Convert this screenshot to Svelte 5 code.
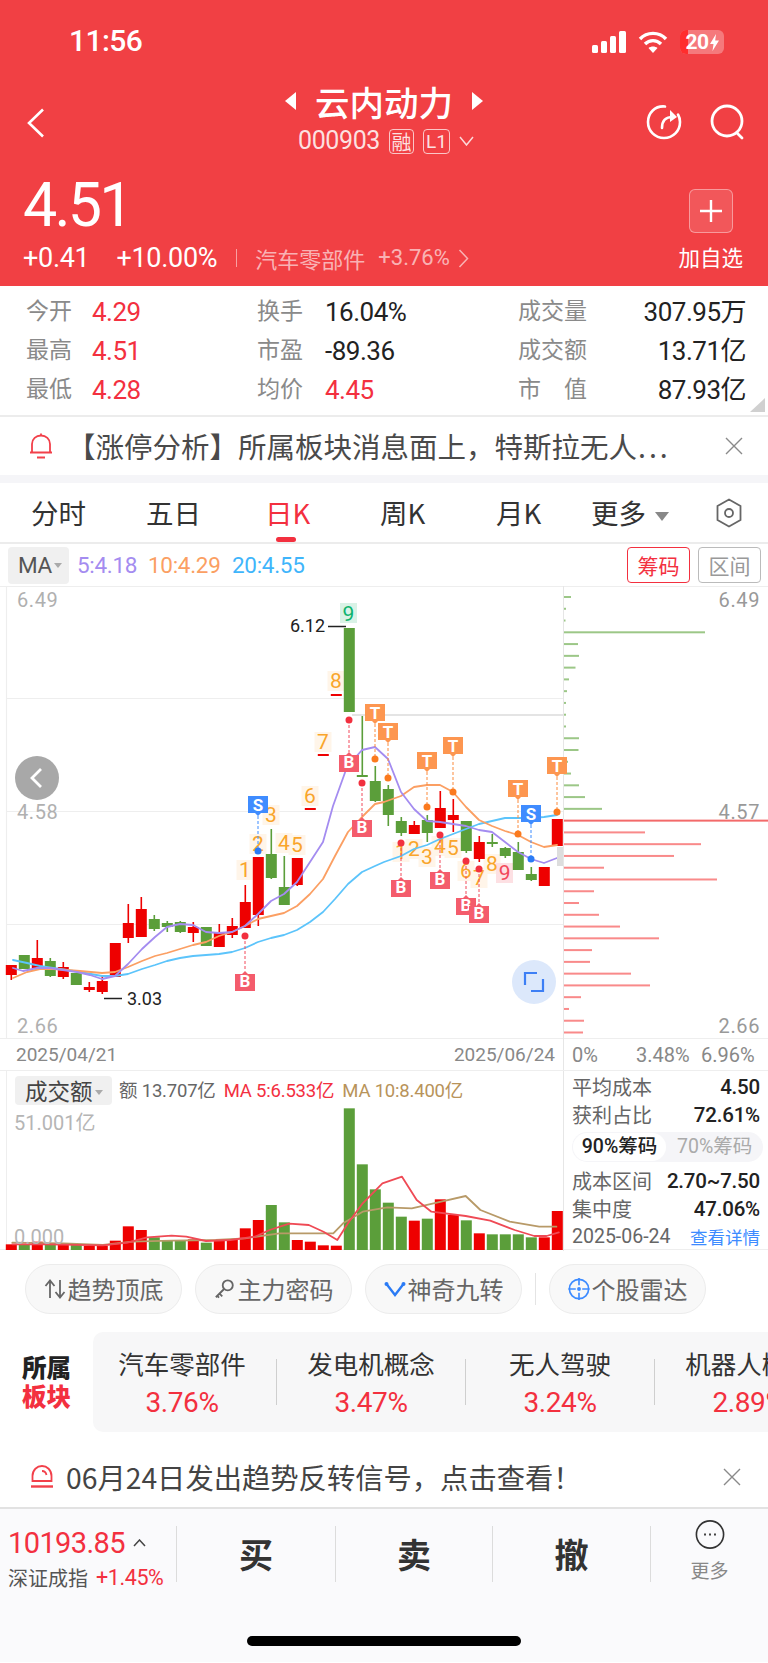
<script>
	const RED = '#ee0000';
	const GREEN = '#5b9e3a';

	const x0 = 11.3;
	const step = 13;
	const xAt = (i) => x0 + i * step;

	// [up, bodyTop, bodyBottom, wickTop, wickBottom]
	const candles = [
		[1, 966, 976, 966, 981], [0, 956, 970, 956, 970], [1, 959, 969, 941, 969], [0, 962, 977, 959, 978],
		[1, 968, 978, 963, 980], [0, 974, 986, 974, 986], [1, 988, 991, 983, 993], [1, 982, 993, 977, 995],
		[1, 944, 978, 944, 978], [1, 924, 939, 905, 944], [1, 910, 938, 898, 938], [0, 920, 930, 916, 932],
		[0, 924, 928, 922, 933], [0, 923, 933, 922, 934], [1, 928, 934, 923, 943], [0, 928, 947, 928, 947],
		[1, 934, 948, 925, 948], [1, 927, 936, 919, 939], [1, 903, 929, 886, 929], [1, 858, 916, 858, 927],
		[0, 855, 879, 830, 880], [0, 888, 906, 857, 906], [1, 859, 886, 859, 887], [1, 809, 811, 809, 811],
		[1, 755, 757, 755, 757], [1, 695, 697, 695, 697], [0, 629, 713, 629, 713], [0, 776, 778, 717, 778],
		[0, 782, 802, 767, 803], [0, 790, 816, 786, 827], [0, 822, 834, 818, 837], [1, 826, 835, 822, 835],
		[0, 821, 834, 816, 843], [1, 809, 829, 792, 829], [1, 816, 821, 800, 833], [0, 822, 852, 822, 854],
		[1, 843, 860, 837, 863], [0, 843, 845, 835, 848], [0, 849, 857, 848, 859], [0, 853, 871, 843, 871],
		[0, 875, 881, 868, 882], [1, 868, 887, 868, 887], [1, 820, 847, 820, 847]
	];

	const ma5 = [[13,969],[23,972],[37,969],[50,969],[63,971],[77,973],[90,976],[102,980],[115,977],[128,965],[142,950],[155,938],[167,928],[180,925],[193,926],[206,933],[219,934],[232,933],[245,927],[258,915],[271,902],[284,895],[297,883],[310,863],[323,843],[333,807],[347,768],[362,751],[375,748],[388,760],[401,793],[414,810],[427,822],[440,823],[453,825],[466,827],[479,831],[492,833],[505,843],[518,853],[531,860],[544,864],[557,859]];
	const ma10 = [[13,979],[27,973],[40,970],[53,970],[67,971],[80,972],[102,974],[115,973],[128,968],[142,962],[155,957],[167,954],[180,950],[193,946],[206,943],[219,937],[232,933],[245,927],[258,920],[271,917],[284,914],[297,907],[310,895],[323,880],[335,857],[348,833],[362,818],[375,805],[384,803],[401,797],[414,788],[427,786],[440,786],[453,793],[466,808],[479,821],[492,827],[505,832],[518,836],[531,843],[544,848],[557,846]];
	const ma20 = [[13,961],[27,964],[40,967],[53,969],[67,971],[80,973],[102,977],[115,977],[128,975],[142,970],[155,966],[167,962],[180,959],[193,957],[206,956],[219,955],[232,953],[245,949],[258,943],[271,939],[284,936],[297,931],[310,923],[323,913],[335,900],[348,885],[362,873],[375,867],[384,863],[401,857],[414,850],[427,846],[440,840],[453,835],[466,830],[479,825],[492,822],[505,819],[518,819],[531,819],[544,818],[557,816]];

	const toPoints = (pts) => pts.map((p) => p.join(',')).join(' ');

	const seq = [
		['1', 245, 871], ['2', 258, 845], ['3', 271, 816], ['4', 284, 844], ['5', 297, 846], ['6', 310, 797],
		['7', 323, 743], ['8', 336, 682], ['1', 401, 853], ['2', 414, 850], ['3', 427, 858], ['4', 440, 847],
		['5', 453, 849], ['6', 466, 872], ['7', 479, 879], ['8', 492, 865]
	];

	// [x, flagTop, dotY]
	const buys = [[245, 972, 937], [349, 753, 721], [362, 818, 784], [401, 878, 844], [440, 870, 836], [466, 896, 862], [479, 904, 870]];
	const tops = [[375, 705, 760], [388, 724, 779], [427, 753, 808], [453, 738, 793], [518, 781, 835], [557, 758, 813]];
	const sells = [[258, 797, 852], [531, 806, 860]];

	function flagDown(x, y) {
		return `M${x - 10} ${y}h20v17h-7l-3 3l-3 -3h-7z`;
	}
	function flagUp(x, y) {
		return `M${x - 10} ${y + 3}h7l3 -3l3 3h7v17h-20z`;
	}

	const chipGreen = [7, 2, 1.5, 141, 14, 15, 11.5, 5, 3, 2, 2, 2, 15, 14.5, 4, 7, 15, 21, 38];
	const chipRed = [205, 81, 137, 110, 40, 153, 30, 15, 35, 56, 95, 28, 26, 67, 86, 17, 5, 20, 19];
	const chips = [
		...chipGreen.map((w) => [w, '#9cc787']),
		...chipRed.map((w, i) => [w, i === 0 ? '#f36a6a' : '#f98a8a'])
	];

	const volTops = [553, 553, 545, 550, 552, 552, 558, 557, 542, 499, 510, 532, 540, 540, 538, 548, 540, 540, 505, 480, 435, 487, 540, 545, 556, 557, 145, 313, 388, 428, 470, 482, 476, 418, 465, 481, 520, 523, 523, 523, 532, 532, 453];
	const volLine5 = [[25,553],[100,553],[210,556],[260,548],[300,532],[350,527],[380,530],[420,543],[470,540],[520,530],[550,510],[590,491],[630,495],[660,515],[688,540],[710,490],[740,430],[780,370],[820,350],[850,420],[880,455],[950,468],[1000,482],[1050,510],[1090,528],[1115,528],[1140,517]];
	const volLine10 = [[25,548],[130,550],[210,555],[270,545],[350,542],[440,540],[500,535],[570,520],[680,520],[700,490],[740,455],[790,442],[840,445],[900,425],[950,408],[980,450],[1040,485],[1100,500],[1135,500]];
	const volPoints = (pts) => pts.map(([x, y]) => `${(x / 2.04).toFixed(1)},${(y / 3).toFixed(1)}`).join(' ');

	const tabs = ['分时', '五日', '日K', '周K', '月K'];
	const sectors = [['汽车零部件', '3.76%'], ['发电机概念', '3.47%'], ['无人驾驶', '3.24%'], ['机器人概念', '2.89%']];
</script>

<div class="page">
	<header class="head">
		<div class="status">
			<span class="time">11:56</span>
			<div class="status-icons">
				<svg width="34" height="22" viewBox="0 0 34 22" fill="#fff">
					<rect x="0" y="14" width="6" height="8" rx="1.5" />
					<rect x="9" y="10" width="6" height="12" rx="1.5" />
					<rect x="18" y="5" width="6" height="17" rx="1.5" />
					<rect x="27" y="0" width="7" height="22" rx="1.5" />
				</svg>
				<svg width="30" height="22" viewBox="0 0 30 22" fill="none" stroke="#fff" stroke-width="3.4">
					<path d="M2 8c7-7.5 19-7.5 26 0" />
					<path d="M7 13c4.500-4.500 11.500-4.500 16 0" />
					<path d="M15 22l-4.500-5c2.500-2 6.500-2 9 0z" fill="#fff" stroke="none" />
				</svg>
				<div class="battery"><i></i><b>20</b><svg width="9" height="17" viewBox="0 0 9 17" fill="#fff"><path d="M6 0L0 10h3.500L2.500 17L9 6.500H5.200z" /></svg></div>
			</div>
		</div>

		<div class="nav">
			<svg class="back" width="18" height="30" viewBox="0 0 18 30" fill="none" stroke="#fff" stroke-width="2.6"><path d="M16 1.500L2 15l14 13.500" /></svg>
			<div class="nav-mid">
				<div class="title-row">
					<span class="tri-l"></span>
					<span class="title">云内动力</span>
					<span class="tri-r"></span>
				</div>
				<div class="code-row">
					<span class="code">000903</span>
					<span class="tag">融</span>
					<span class="tag tag-l">L1</span>
					<svg width="15" height="10" viewBox="0 0 15 10" fill="none" stroke="rgba(255,255,255,.8)" stroke-width="1.500"><path d="M1 1l6.500 8L14 1" /></svg>
				</div>
			</div>
			<div class="nav-icons">
				<svg width="36" height="36" viewBox="0 0 36 36" fill="none" stroke="#fff" stroke-width="2.600" stroke-linecap="round">
					<path d="M19 2.500C9 1.500 2 9 2 18c0 9 7 16 16 16s16-7 16-16c0-3-.8-5.500-2-7.500" />
					<path d="M16 24c0-7 3-11 11-11" />
					<path d="M24 6l7 7l-7 5" fill="#fff" stroke="none" />
				</svg>
				<svg width="36" height="36" viewBox="0 0 36 36" fill="none" stroke="#fff" stroke-width="2.800" stroke-linecap="round">
					<circle cx="17" cy="17" r="15" />
					<path d="M27 29l5 5" />
				</svg>
			</div>
		</div>

		<div class="quote">
			<div class="quote-left">
				<div class="price">4.51</div>
				<div class="change">
					<span class="chg">+0.41</span>
					<span class="chg pct">+10.00%</span>
					<span class="vbar"></span>
					<span class="sector-name">汽车零部件</span>
					<span class="sector-pct">+3.76%</span>
					<svg width="11" height="19" viewBox="0 0 11 19" fill="none" stroke="rgba(255,255,255,.6)" stroke-width="1.500"><path d="M1.500 1L9.500 9.500L1.500 18" /></svg>
				</div>
			</div>
			<div class="add">
				<div class="add-btn">
					<svg width="22" height="22" viewBox="0 0 22 22" stroke="#fff" stroke-width="2.400"><path d="M11 0v22M0 11h22" /></svg>
				</div>
				<span>加自选</span>
			</div>
		</div>
	</header>

	<section class="stats">
		<div class="stat-col col-a">
			<div class="stat"><span class="k">今开</span><span class="v up">4.29</span></div>
			<div class="stat"><span class="k">最高</span><span class="v up">4.51</span></div>
			<div class="stat"><span class="k">最低</span><span class="v up">4.28</span></div>
		</div>
		<div class="stat-col col-b">
			<div class="stat"><span class="k">换手</span><span class="v">16.04%</span></div>
			<div class="stat"><span class="k">市盈</span><span class="v">-89.36</span></div>
			<div class="stat"><span class="k">均价</span><span class="v up">4.45</span></div>
		</div>
		<div class="stat-col col-c">
			<div class="stat"><span class="k wide">成交量</span><span class="v">307.95万</span></div>
			<div class="stat"><span class="k wide">成交额</span><span class="v">13.71亿</span></div>
			<div class="stat"><span class="k wide">市　值</span><span class="v">87.93亿</span></div>
		</div>
		<span class="corner"></span>
	</section>

	<div class="notice">
		<svg width="24" height="26" viewBox="0 0 24 26" fill="none" stroke="#f2404a" stroke-width="1.800">
			<path d="M3 19V11c0-5 4-8.500 9-8.500S21 6 21 11v8M1 19.500h22M8 24.500h8M12 0.500v2" />
		</svg>
		<span class="notice-text">【涨停分析】所属板块消息面上，特斯拉无人<span class="dots">...</span></span>
		<svg class="close" width="18" height="18" viewBox="0 0 18 18" stroke="#8a8a8a" stroke-width="1.400"><path d="M1 1l16 16M17 1L1 17" /></svg>
	</div>
	<div class="band"></div>

	<nav class="tabs">
		{#each tabs as t, i}
			<span class="tab" class:on={i === 2}>{t}</span>
		{/each}
		<span class="tab more">更多<i></i></span>
		<svg class="hex" width="26" height="30" viewBox="0 0 26 30" fill="none" stroke="#666" stroke-width="1.800">
			<path d="M13 1.500L24.500 8v14L13 28.500L1.500 22V8z" />
			<circle cx="13" cy="15" r="4" />
		</svg>
	</nav>

	<div class="ma-row">
		<span class="ma-btn">MA<i></i></span>
		<span class="m5">5:4.18</span>
		<span class="m10">10:4.29</span>
		<span class="m20">20:4.55</span>
		<span class="side-btn active">筹码</span>
		<span class="side-btn">区间</span>
	</div>

	<div class="chart">
		<svg class="plot" width="768" height="453" viewBox="0 587 768 453">
			<g stroke="#eeeeee" stroke-width="1.200">
				<path d="M0 587.500H768M6.500 587V1040M6 699.500H563M6 812.500H563M6 925.500H563M0 1039.500H768" />
			</g>
			<path d="M352 716H563" stroke="#e4e4e4" stroke-width="1.800" />
			<path d="M563.500 587V1040" stroke="#e6e6e6" />

			{#each chips as [w, c], i}
				<rect x="564" y={597 + i * 11.77} width={w} height="2" fill={c} />
			{/each}

			{#each seq as [n, x, y]}
				<rect x={x - 8.500} y={y - 10} width="17" height="20" fill="#fff5e9" />
			{/each}
			<rect x="340" y="604" width="17" height="20" fill="#d9f2e6" />
			<rect x="496" y="864" width="17" height="20" fill="#fde0e3" />

			{#each candles as [up, top, bottom, wt, wb], i}
				<rect x={xAt(i) - 0.800} y={wt} width="1.600" height={wb - wt} fill={up ? RED : GREEN} />
				<rect x={xAt(i) - 5.500} y={top} width="11" height={bottom - top} fill={up ? RED : GREEN} />
			{/each}

			{#each seq as [n, x, y]}
				<text class="seq" x={x} y={y + 7} fill="#f9a52b">{n}</text>
			{/each}
			<text class="seq" x="348.500" y="622" fill="#0db36e">9</text>
			<text class="seq" x="504.700" y="881" fill="#f2485a">9</text>

			<polyline points={toPoints(ma20)} class="ma" stroke="#5cc4fb" />
			<polyline points={toPoints(ma10)} class="ma" stroke="#fb9f63" />
			<polyline points={toPoints(ma5)} class="ma" stroke="#a48cf0" />

			{#each buys as [x, y, d]}
				<path d="M{x} {d}V{y}" stroke="#f2485a" stroke-dasharray="3 2" />
				<circle cx={x} cy={d} r="3.500" fill="#f2303f" />
				<path d={flagUp(x, y)} fill="#f45c6c" />
				<text class="flag" x={x} y={y + 16}>B</text>
			{/each}
			{#each tops as [x, y, d]}
				<path d="M{x} {y + 20}V{d}" stroke="#fb8a3c" stroke-dasharray="3 2" />
				<circle cx={x} cy={d} r="3.500" fill="#fb7a1e" />
				<path d={flagDown(x, y)} fill="#fd9650" />
				<text class="flag" x={x} y={y + 15}>T</text>
			{/each}
			{#each sells as [x, y, d]}
				<path d="M{x} {y + 20}V{d}" stroke="#3d8bff" stroke-dasharray="3 2" />
				<circle cx={x} cy={d} r="3.500" fill="#2b7bf5" />
				<path d={flagDown(x, y)} fill="#3f8cff" />
				<text class="flag" x={x} y={y + 15}>S</text>
			{/each}

			<rect x="557" y="848" width="6" height="19" fill="#dddddd" />

			<path d="M328 627.500H346" stroke="#222" stroke-width="1.500" />
			<text class="mark" x="290" y="633">6.12</text>
			<path d="M104 999.500H122" stroke="#222" stroke-width="1.500" />
			<text class="mark" x="127" y="1006">3.03</text>

			<text class="axis" x="17" y="608">6.49</text>
			<text class="axis" x="17" y="820">4.58</text>
			<text class="axis" x="17" y="1034">2.66</text>
			<text class="axis dark end" x="760" y="608">6.49</text>
			<text class="axis dark end" x="760" y="820">4.57</text>
			<text class="axis dark end" x="760" y="1034">2.66</text>

			<circle cx="37" cy="779" r="22" fill="#a8a8a8" />
			<path d="M41 770l-9 9l9 9" fill="none" stroke="#fff" stroke-width="2.800" />

			<circle cx="534" cy="983" r="22" fill="#dce8fb" />
			<path d="M525 986v-12h12M543 980v12h-12" fill="none" stroke="#3d7ff5" stroke-width="2.200" />
		</svg>
	</div>

	<div class="dates">
		<span class="date-l">2025/04/21</span>
		<span class="date-r">2025/06/24</span>
		<span class="pc p0">0%</span>
		<span class="pc p1">3.48%</span>
		<span class="pc p2">6.96%</span>
	</div>

	<div class="lower">
		<div class="vol">
			<div class="vol-head">
				<span class="vol-btn">成交额<i></i></span>
				<span class="vol-a">额 13.707亿</span>
				<span class="vol-b">MA 5:6.533亿</span>
				<span class="vol-c">MA 10:8.400亿</span>
			</div>
			<div class="vol-chart">
				<svg class="vol-svg" width="563" height="199" viewBox="0 -9 563 199">
					{#each volTops as top, i}
						<rect x={xAt(i) - 5.500} y={top / 3} width="11" height={190 - top / 3} fill={candles[i][0] ? RED : GREEN} />
					{/each}
					<polyline points={volPoints(volLine10)} class="ma" stroke="#b89a68" />
					<polyline points={volPoints(volLine5)} class="ma" stroke="#ef4a55" />
				</svg>
				<span class="vol-max">51.001亿</span>
				<span class="vol-min">0.000</span>
			</div>
		</div>
		<aside class="cost">
			<div class="cost-row"><span>平均成本</span><b>4.50</b></div>
			<div class="cost-row"><span>获利占比</span><b>72.61%</b></div>
			<div class="toggle"><span class="toggle-on">90%筹码</span><span class="toggle-off">70%筹码</span></div>
			<div class="cost-row"><span>成本区间</span><b>2.70~7.50</b></div>
			<div class="cost-row"><span>集中度</span><b>47.06%</b></div>
			<div class="cost-row foot"><span>2025-06-24</span><em>查看详情</em></div>
		</aside>
	</div>

	<div class="pills">
		<span class="pill">
			<svg width="22" height="20" viewBox="0 0 22 20" fill="none" stroke="#666" stroke-width="1.800"><path d="M6 19V2M1.500 7L6 1.500L10.500 7M16 1v17M11.500 13l4.500 5.500l4.500-5.500" /></svg>
			趋势顶底
		</span>
		<span class="pill">
			<svg width="22" height="22" viewBox="0 0 24 24" fill="none" stroke="#666" stroke-width="2"><circle cx="15" cy="8" r="5.500" /><path d="M11 12L2 21M6 17l3 3M3.500 19.500l2 2" /></svg>
			主力密码
		</span>
		<span class="pill">
			<svg width="22" height="16" viewBox="0 0 22 16" fill="none" stroke="#2b7bf5" stroke-width="2.400"><path d="M2.500 3L11 14L19.500 3" /><circle cx="2.500" cy="3" r="2" fill="#2b7bf5" stroke="none" /><circle cx="19.500" cy="3" r="2" fill="#2b7bf5" stroke="none" /></svg>
			神奇九转
		</span>
		<span class="pill-sep"></span>
		<span class="pill">
			<svg width="22" height="24" viewBox="0 0 24 26" fill="none" stroke="#3d8bff" stroke-width="1.800"><circle cx="12" cy="13" r="10.500" /><path d="M12 1v8M12 17v8M0.500 13h8M15.500 13h8" /><circle cx="12" cy="13" r="1.200" fill="#3d8bff" /></svg>
			个股雷达
		</span>
	</div>

	<section class="sectors">
		<div class="sec-label"><b>所属</b><b class="up">板块</b></div>
		<div class="sec-card">
			<div class="sec-track">
				{#each sectors as [name, pct]}
					<div class="sec-item">
						<span class="sec-name">{name}</span>
						<span class="sec-pct">{pct}</span>
					</div>
				{/each}
			</div>
		</div>
	</section>

	<div class="signal">
		<svg width="24" height="24" viewBox="0 0 24 24" fill="none" stroke="#f2404a" stroke-width="1.800">
			<path d="M2.500 16V11C2.500 5 7 1 12 1s9.500 4 9.500 10v5z" />
			<path d="M12 6c2.500 0 4 1.500 4.500 4" />
			<path d="M1 21.500h22" stroke-width="2.400" />
		</svg>
		<span class="signal-text">06月24日发出趋势反转信号，点击查看！</span>
		<svg class="close" width="18" height="18" viewBox="0 0 18 18" stroke="#8a8a8a" stroke-width="1.400"><path d="M1 1l16 16M17 1L1 17" /></svg>
	</div>

	<footer class="bar">
		<div class="bar-row">
			<div class="index">
				<div class="idx-top">
					<span class="idx-val">10193.85</span>
					<svg width="13" height="8" viewBox="0 0 13 8" fill="none" stroke="#444" stroke-width="1.500"><path d="M1 7l5.500-6L12 7" /></svg>
				</div>
				<div class="idx-sub"><span>深证成指</span><em>+1.45%</em></div>
			</div>
			<span class="act buy">买</span>
			<span class="act">卖</span>
			<span class="act">撤</span>
			<div class="act-more">
				<svg width="32" height="32" viewBox="0 0 32 32" fill="none" stroke="#333" stroke-width="1.800">
					<circle cx="16" cy="16" r="15" />
					<path d="M9.500 16h2M15 16h2M20.500 16h2" stroke-width="2" />
				</svg>
				<span>更多</span>
			</div>
		</div>
		<div class="home"></div>
	</footer>
</div>

<style>
	:global(body) {
		margin: 0;
		background: #fff;
	}
	.page {
		--num: Roboto, "Noto Sans CJK SC", sans-serif;
		--cjk: "Noto Sans CJK SC", sans-serif;
		--up: #f3303f;
		width: 768px;
		height: 1663px;
		overflow: hidden;
		font-family: var(--cjk);
		position: relative;
	}
	.up {
		color: var(--up);
	}

	.head {
		height: 286px;
		background: #f14044;
		color: #fff;
		box-sizing: border-box;
	}
	.status {
		height: 76px;
		padding: 22px 44px 0 69px;
		box-sizing: border-box;
		display: flex;
		justify-content: space-between;
		align-items: flex-start;
	}
	.time {
		font: 500 30px/38px var(--num);
		letter-spacing: -0.6px;
	}
	.status-icons {
		display: flex;
		align-items: center;
		gap: 12px;
		margin-top: 8px;
	}
	.battery {
		width: 44px;
		height: 24px;
		border-radius: 6px;
		background: rgba(255, 255, 255, 0.3);
		display: flex;
		align-items: center;
		justify-content: center;
		gap: 1px;
		position: relative;
		overflow: hidden;
	}
	.battery i {
		position: absolute;
		left: 0;
		top: 0;
		bottom: 0;
		width: 8px;
		background: #ff2d2d;
	}
	.battery b {
		font: 700 21px/24px var(--num);
		position: relative;
		letter-spacing: -0.5px;
	}
	.nav {
		height: 84px;
		display: flex;
		position: relative;
		justify-content: center;
	}
	.back {
		position: absolute;
		left: 27px;
		top: 32px;
	}
	.nav-mid {
		display: flex;
		flex-direction: column;
		align-items: center;
	}
	.title-row {
		height: 50px;
		display: flex;
		align-items: center;
		gap: 19px;
	}
	.title {
		font: 500 34.500px/50px var(--cjk);
	}
	.tri-l,
	.tri-r {
		width: 0;
		height: 0;
		border-top: 9px solid transparent;
		border-bottom: 9px solid transparent;
	}
	.tri-l {
		border-right: 11px solid #fff;
	}
	.tri-r {
		border-left: 11px solid #fff;
	}
	.code-row {
		display: flex;
		align-items: center;
		gap: 9px;
		height: 30px;
		margin-left: 4px;
		color: rgba(255, 255, 255, 0.85);
	}
	.code {
		font: 400 25px/30px var(--num);
		letter-spacing: -0.4px;
	}
	.tag {
		width: 25px;
		height: 25px;
		box-sizing: border-box;
		border: 1px solid rgba(255, 255, 255, 0.7);
		border-radius: 4px;
		font: 400 20px/23px var(--cjk);
		text-align: center;
	}
	.tag-l {
		width: 27px;
		font: 400 19px/23px var(--num);
	}
	.nav-icons {
		position: absolute;
		right: 22px;
		top: 28px;
		display: flex;
		gap: 28px;
	}
	.quote {
		height: 126px;
		position: relative;
		padding-left: 23px;
	}
	.price {
		font: 400 61px/66px var(--num);
		letter-spacing: -2.800px;
		height: 75px;
		padding-top: 12px;
		box-sizing: border-box;
	}
	.quote-left {
		display: flex;
		flex-direction: column;
	}
	.change {
		display: flex;
		align-items: center;
		height: 24px;
		margin-top: 11px;
	}
	.chg {
		font: 400 27px/24px var(--num);
		letter-spacing: -0.3px;
	}
	.pct {
		margin-left: 27px;
	}
	.vbar {
		width: 1px;
		height: 18px;
		margin: 0 18px 0 19px;
		background: rgba(255, 255, 255, 0.5);
	}
	.sector-name {
		font: 400 22px/24px var(--cjk);
		color: rgba(255, 255, 255, 0.62);
	}
	.sector-pct {
		font: 400 22px/24px var(--num);
		color: rgba(255, 255, 255, 0.62);
		margin: 0 8px 0 13px;
	}
	.add {
		position: absolute;
		right: 25px;
		top: 29px;
		display: flex;
		flex-direction: column;
		align-items: center;
		gap: 9px;
		font: 400 21.500px/30px var(--cjk);
	}
	.add-btn {
		width: 44px;
		height: 44px;
		box-sizing: border-box;
		border: 1px solid rgba(255, 255, 255, 0.4);
		border-radius: 6px;
		background: rgba(255, 255, 255, 0.12);
		display: flex;
		align-items: center;
		justify-content: center;
	}

	.stats {
		height: 131px;
		box-sizing: border-box;
		padding-top: 5px;
		border-bottom: 2px solid #ececec;
		position: relative;
		display: grid;
		grid-template-columns: 257px 261px 1fr;
	}
	.stat {
		height: 39px;
		display: flex;
		align-items: center;
	}
	.col-a {
		padding-left: 26px;
	}
	.col-c {
		padding-right: 22px;
	}
	.col-c .stat {
		justify-content: space-between;
	}
	.k {
		font: 400 23px/39px var(--cjk);
		color: #8a8a8a;
		width: 66px;
		margin-top: -2px;
	}
	.k.wide {
		width: auto;
	}
	.v {
		font: 400 26px/39px var(--num);
		color: #222;
		letter-spacing: -0.5px;
		margin-top: 4px;
	}
	.v.up {
		color: var(--up);
	}
	.col-b .k {
		width: 68px;
	}
	.corner {
		position: absolute;
		right: 3px;
		bottom: 3px;
		width: 0;
		height: 0;
		border-left: 15px solid transparent;
		border-bottom: 14px solid #d0d0d0;
	}

	.notice {
		height: 58px;
		display: flex;
		align-items: center;
		padding: 0 25px 0 29px;
		color: #444;
	}
	.notice-text {
		font: 400 28.500px/56px var(--cjk);
		margin-left: 14px;
		flex: 1;
		white-space: nowrap;
		color: #4a4a4a;
	}
	.dots {
		letter-spacing: 3px;
		margin-left: 1px;
	}
	.band {
		height: 8px;
		background: #f5f5f8;
	}

	.tabs {
		height: 61px;
		border-bottom: 2px solid #ececec;
		box-sizing: border-box;
		position: relative;
		display: flex;
		align-items: flex-start;
		padding-left: 31px;
	}
	.tab {
		font: 400 27.500px/58px var(--cjk);
		color: #333;
		flex: 0 0 116px;
		white-space: nowrap;
	}
	.tab:nth-child(3) {
		margin-left: 3px;
		flex-basis: 115px;
	}
	.tab:nth-child(2) {
		flex-basis: 116px;
		margin-left: -1px;
	}
	.tab.on {
		color: var(--up);
		position: relative;
	}
	.tab.on::after {
		content: '';
		position: absolute;
		left: 11px;
		top: 54px;
		width: 20px;
		height: 5px;
		border-radius: 3px;
		background: var(--up);
	}
	.tab.more {
		position: absolute;
		left: 591px;
	}
	.tab.more i {
		display: inline-block;
		margin-left: 9px;
		border-left: 7px solid transparent;
		border-right: 7px solid transparent;
		border-top: 9px solid #888;
		vertical-align: 3px;
	}
	.hex {
		position: absolute;
		right: 26px;
		top: 15px;
	}

	.ma-row {
		height: 42px;
		display: flex;
		align-items: center;
		padding: 0 7px 0 8px;
		font: 400 22.500px/40px var(--num);
		letter-spacing: -0.3px;
		position: relative;
	}
	.ma-btn {
		width: 61px;
		height: 37px;
		box-sizing: border-box;
		padding-left: 10px;
		border-radius: 4px;
		background: #f0f0f0;
		color: #555;
		line-height: 37px;
		margin-right: 8px;
	}
	.ma-btn i,
	.vol-btn i {
		display: inline-block;
		margin-left: 2px;
		border-left: 4px solid transparent;
		border-right: 4px solid transparent;
		border-top: 5px solid #aaa;
		vertical-align: 5px;
	}
	.m5 {
		color: #a48cf0;
		width: 71px;
	}
	.m10 {
		color: #fb9f63;
		width: 84px;
	}
	.m20 {
		color: #3fb5fb;
	}
	.side-btn {
		width: 63px;
		height: 36px;
		box-sizing: border-box;
		border: 1px solid #bbb;
		border-radius: 4px;
		color: #999;
		font: 400 21px/34px var(--cjk);
		text-align: center;
		letter-spacing: 0;
		margin-left: 8px;
	}
	.side-btn.active {
		margin-left: auto;
		border-color: var(--up);
		color: var(--up);
	}

	.chart {
		height: 453px;
	}
	.plot {
		display: block;
	}
	.ma {
		fill: none;
		stroke-width: 1.800;
		stroke-linejoin: round;
		stroke-linecap: round;
	}
	.seq {
		font: 400 21px var(--num);
		text-anchor: middle;
	}
	.flag {
		font: 700 17px var(--num);
		fill: #fff;
		text-anchor: middle;
	}
	.mark {
		font: 400 18px var(--num);
		fill: #222;
	}
	.axis {
		font: 400 20px var(--num);
		fill: #b0b0b0;
		letter-spacing: 0.6px;
	}
	.axis.dark {
		fill: #999;
	}
	.axis.end {
		text-anchor: end;
	}

	.dates {
		height: 32px;
		position: relative;
		border-bottom: 1px solid #eee;
		box-sizing: border-box;
		font: 400 19px/32px var(--num);
		color: #888;
	}
	.dates::after {
		content: '';
		position: absolute;
		left: 563px;
		top: 0;
		bottom: 0;
		width: 1px;
		background: #e6e6e6;
	}
	.dates span {
		position: absolute;
		top: 0;
	}
	.date-l {
		left: 16px;
	}
	.date-r {
		right: 213px;
	}
	.pc {
		font-size: 20px;
	}
	.p0 {
		left: 572px;
	}
	.p1 {
		left: 636px;
	}
	.p2 {
		left: 701px;
	}

	.lower {
		display: grid;
		grid-template-columns: 563px 205px;
		height: 179px;
		border-bottom: 1px solid #eee;
		box-sizing: border-box;
	}
	.vol {
		border-left: 1px solid #eee;
		margin-left: 6px;
		position: relative;
		height: 178px;
	}
	.vol-head {
		display: flex;
		align-items: center;
		height: 34px;
		padding: 5px 0 0 8px;
		font: 400 18.500px/30px var(--num);
		letter-spacing: -0.2px;
		position: relative;
		z-index: 1;
		box-sizing: border-box;
	}
	.vol-btn {
		width: 97px;
		height: 29px;
		box-sizing: border-box;
		padding-left: 10px;
		background: #f0f0f0;
		border-radius: 4px;
		font: 400 22.500px/29px var(--cjk);
		color: #444;
		margin-right: 7px;
		letter-spacing: 0;
		white-space: nowrap;
	}
	.vol-a {
		color: #666;
		margin-right: 8px;
	}
	.vol-b {
		color: var(--up);
		margin-right: 8px;
	}
	.vol-c {
		color: #b8935a;
	}
	.vol-svg {
		position: absolute;
		left: -7px;
		top: -20px;
	}
	.vol-max,
	.vol-min {
		position: absolute;
		left: 7px;
		font: 400 20px/24px var(--num);
		color: #b5b5b5;
	}
	.vol-max {
		top: 40px;
	}
	.vol-min {
		top: 154px;
	}
	.cost {
		border-left: 1px solid #e6e6e6;
		padding: 2px 8px 0 8px;
		box-sizing: border-box;
	}
	.cost-row {
		display: flex;
		justify-content: space-between;
		align-items: center;
		height: 28px;
		font: 400 20px/28px var(--cjk);
		color: #666;
	}
	.cost-row b {
		font: 500 20.500px/28px var(--num);
		color: #222;
		letter-spacing: -0.2px;
	}
	.toggle {
		display: flex;
		align-items: center;
		height: 30px;
		border-radius: 15px;
		background: #f5f5f8;
		margin: 3px -3px 5px 0;
		font: 400 19.500px/28px var(--num);
	}
	.toggle-on {
		width: 93px;
		height: 28px;
		margin-left: 1px;
		border-radius: 14px;
		background: #fff;
		color: #222;
		text-align: center;
		font-weight: 500;
	}
	.toggle-off {
		margin-left: 11px;
		color: #aaa;
	}
	.foot span {
		font: 400 19.500px/28px var(--num);
	}
	.foot em {
		font: 400 17.500px/28px var(--cjk);
		color: #3d8bff;
		font-style: normal;
	}

	.pills {
		height: 82px;
		padding: 14px 0 0 25px;
		box-sizing: border-box;
		display: flex;
		align-items: flex-start;
		gap: 13px;
	}
	.pill {
		width: 157px;
		height: 50px;
		box-sizing: border-box;
		border: 1px solid #ececec;
		border-radius: 25px;
		background: #f8f8f8;
		display: flex;
		align-items: center;
		justify-content: center;
		gap: 2px;
		font: 400 24px/48px var(--cjk);
		color: #666;
	}
	.pill-sep {
		width: 1px;
		height: 32px;
		margin-top: 9px;
		background: #e4e4e4;
	}

	.sectors {
		height: 100px;
		display: flex;
		align-items: stretch;
	}
	.sec-label {
		width: 93px;
		padding-left: 22px;
		box-sizing: border-box;
		display: flex;
		flex-direction: column;
		justify-content: center;
		font: 700 24.500px/29px var(--cjk);
		color: #222;
		margin-top: -2px;
	}
	.sec-card {
		flex: 1;
		background: #f7f7f8;
		border-radius: 10px 0 0 10px;
		overflow: hidden;
	}
	.sec-track {
		display: flex;
		margin-left: -5px;
		height: 100%;
		align-items: center;
	}
	.sec-item {
		flex: 0 0 189px;
		height: 46px;
		box-sizing: border-box;
		padding-top: 4px;
		border-right: 1px solid #cfcfcf;
		display: flex;
		flex-direction: column;
		align-items: center;
		justify-content: center;
		white-space: nowrap;
	}
	.sec-name {
		font: 400 25.500px/38px var(--cjk);
		color: #333;
		margin-top: -2px;
	}
	.sec-pct {
		font: 400 28px/38px var(--num);
		color: var(--up);
		letter-spacing: -0.4px;
		margin-top: 2px;
	}

	.signal {
		height: 77px;
		display: flex;
		align-items: center;
		padding: 15px 27px 0 30px;
		box-sizing: border-box;
		border-bottom: 2px solid #e2e2e2;
	}
	.signal-text {
		font: 400 28.300px/40px var(--cjk);
		color: #444;
		flex: 1;
		margin-left: 12px;
		white-space: nowrap;
	}

	.bar {
		height: 153px;
		background: #fafafc;
	}
	.bar-row {
		height: 127px;
		display: grid;
		grid-template-columns: 176px 159px 157px 158px 118px;
		padding-top: 17px;
		box-sizing: border-box;
	}
	.index {
		padding-left: 8px;
		height: 56px;
		position: relative;
	}
	.idx-top {
		display: flex;
		align-items: center;
		gap: 8px;
		height: 34px;
	}
	.idx-val {
		font: 400 29px/34px var(--num);
		color: var(--up);
		letter-spacing: -0.6px;
	}
	.idx-sub {
		display: flex;
		align-items: center;
		gap: 8px;
		height: 34px;
		font: 400 20px/34px var(--cjk);
		color: #555;
		white-space: nowrap;
		margin-top: 1px;
	}
	.idx-sub em {
		font: 400 21.500px/34px var(--num);
		color: var(--up);
		letter-spacing: -0.4px;
		font-style: normal;
	}
	.act {
		height: 56px;
		border-left: 1px solid #dcdcdc;
		font: 700 34px/56px var(--cjk);
		color: #333;
		text-align: center;
	}
	.act-more {
		height: 56px;
		border-left: 1px solid #dcdcdc;
		display: flex;
		flex-direction: column;
		align-items: center;
		padding-right: 0;
		position: relative;
		font: 400 19px/24px var(--cjk);
		color: #888;
	}
	.act-more svg {
		margin-top: -6px;
		margin-bottom: 9px;
	}
	.home {
		width: 274px;
		height: 10px;
		margin: 0 auto;
		border-radius: 5px;
		background: #000;
	}
</style>
